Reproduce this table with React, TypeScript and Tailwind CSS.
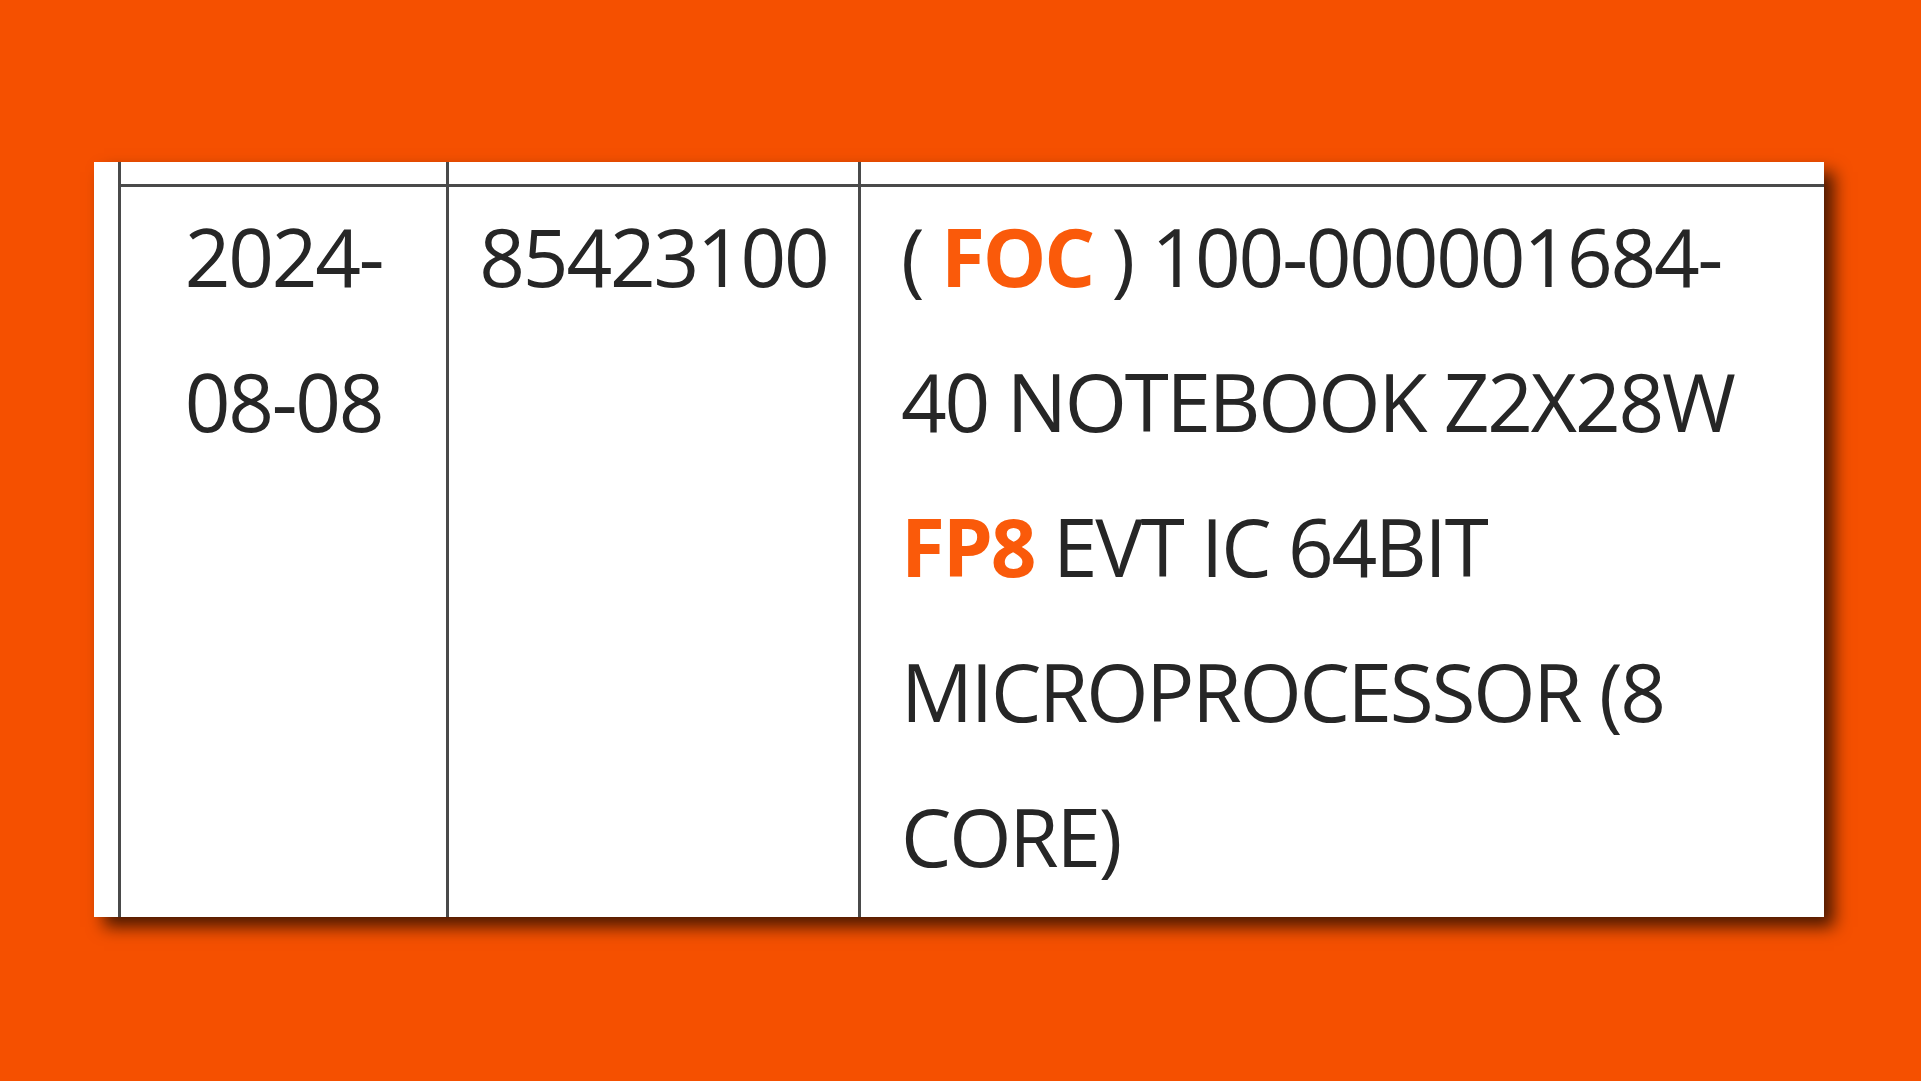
export default function App() {
  const cell = "border-l-[3px] border-[#4a4a4a]";
  return (
    <div className="w-[1921px] h-[1081px] bg-[#f55000] pt-[162px] pl-[94px] overflow-hidden font-['Open_Sans',sans-serif] text-[#262626]">
      <div className="w-[1730px] h-[755px] bg-white shadow-[10px_10px_16px_rgba(0,0,0,0.7)] overflow-hidden pl-[24px] flex flex-col">
        {/* header row, cut off at the top */}
        <div className="flex h-[25px] border-b-[3px] border-[#4a4a4a] shrink-0">
          <div className={`${cell} w-[328px]`} />
          <div className={`${cell} w-[412px]`} />
          <div className={`${cell} flex-1`} />
        </div>
        {/* body row */}
        <div className="flex flex-1 text-[80px] leading-[145px] tracking-[-2.2px]">
          <div className={`${cell} w-[328px] text-center -mt-[4px]`}>
            <div>2024-</div>
            <div>08-08</div>
          </div>
          <div className={`${cell} w-[412px] text-center`}>
            <div className="-mt-[4px]">85423100</div>
          </div>
          <div className={`${cell} flex-1 pl-[40px]`}>
            <div className="-mt-[4px]">
              <div>
                ( <span className="font-bold text-[#fa5a0a]">FOC</span> ) 100-000001684-
              </div>
              <div>40 NOTEBOOK Z2X28W</div>
              <div>
                <span className="font-bold text-[#fa5a0a]">FP8</span> EVT IC 64BIT
              </div>
              <div>MICROPROCESSOR (8</div>
              <div>CORE)</div>
            </div>
          </div>
        </div>
      </div>
    </div>
  );
}
